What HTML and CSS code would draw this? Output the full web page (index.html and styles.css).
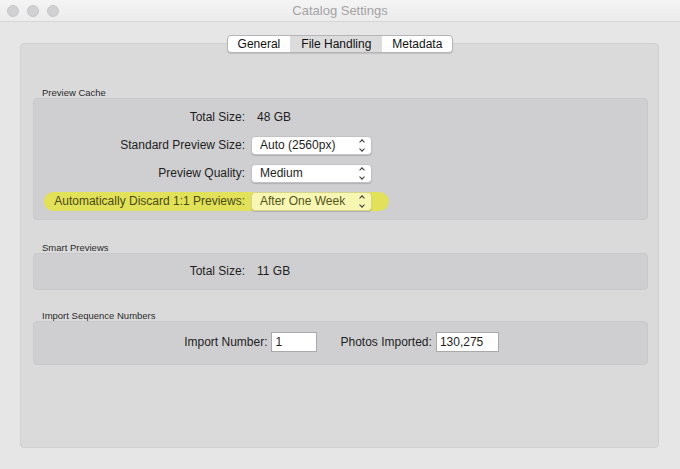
FILE: index.html
```html
<!DOCTYPE html>
<html lang="en">
<head>
    <meta charset="UTF-8">
    <meta name="viewport" content="width=device-width, initial-scale=1.0">
    <title>Catalog Settings</title>
    <link rel="stylesheet" href="styles.css">
</head>
<body>
    <div class="window">
        <div class="titlebar">
            <div class="lights">
                <span class="light"></span>
                <span class="light"></span>
                <span class="light"></span>
            </div>
            <div class="title">Catalog Settings</div>
        </div>

        <div class="content">
            <div class="tabs">
                <span class="tab">General</span>
                <span class="tab selected">File Handling</span>
                <span class="tab">Metadata</span>
            </div>

            <div class="panel">
                <div class="section-label">Preview Cache</div>
                <div class="group">
                    <div class="row">
                        <span class="label">Total Size:</span>
                        <span class="value">48 GB</span>
                    </div>
                    <div class="row">
                        <span class="label">Standard Preview Size:</span>
                        <span class="select">Auto (2560px)</span>
                    </div>
                    <div class="row">
                        <span class="label">Preview Quality:</span>
                        <span class="select">Medium</span>
                    </div>
                    <div class="row highlight">
                        <span class="label">Automatically Discard 1:1 Previews:</span>
                        <span class="select">After One Week</span>
                    </div>
                </div>

                <div class="section-label">Smart Previews</div>
                <div class="group small">
                    <div class="row">
                        <span class="label">Total Size:</span>
                        <span class="value">11 GB</span>
                    </div>
                </div>

                <div class="section-label">Import Sequence Numbers</div>
                <div class="group import">
                    <div class="import-row">
                        <span class="field-label">Import Number:</span>
                        <span class="input short">1</span>
                        <span class="field-label second">Photos Imported:</span>
                        <span class="input">130,275</span>
                    </div>
                </div>
            </div>
        </div>
    </div>
</body>
</html>
```

FILE: styles.css
```css
html, body {
    margin: 0;
    height: 100%;
}
body {
    font-family: "Liberation Sans", Arial, sans-serif;
    font-size: 12px;
    color: #1e1e1e;
    background: #e6e6e7;
}
.window {
    height: 469px;
    display: flex;
    flex-direction: column;
    background: #e6e6e7;
    border-radius: 0 0 5px 5px;
    overflow: hidden;
}
.titlebar {
    height: 22px;
    flex: none;
    box-sizing: border-box;
    display: flex;
    align-items: center;
    background: linear-gradient(#f4f4f4, #ececec);
    border-bottom: 1px solid #d6d6d6;
    position: relative;
}
.lights {
    display: flex;
    gap: 8px;
    padding-left: 7px;
}
.light {
    width: 12px;
    height: 12px;
    box-sizing: border-box;
    border-radius: 50%;
    background: #d1d1d3;
    border: 1px solid #c6c6c8;
}
.title {
    position: absolute;
    left: 0;
    right: 0;
    text-align: center;
    font-size: 13px;
    color: #a3a3a3;
}
.content {
    flex: 1;
    display: flex;
    flex-direction: column;
    padding: 13px 21px 21px 20px;
}
.tabs {
    align-self: center;
    display: flex;
    height: 16px;
    margin-bottom: -10px;
    margin-left: 1px;
    position: relative;
    z-index: 1;
    background: #fff;
    border: 1px solid #b5b5b7;
    border-radius: 4px;
    box-shadow: 0 1px 1px rgba(0, 0, 0, 0.12);
    overflow: hidden;
}
.tab {
    display: flex;
    align-items: center;
    padding: 0 10px;
    color: #111;
}
.tab.selected {
    background: #dcdcdd;
    padding: 0 11px;
}
.panel {
    flex: 1;
    background: #dadadb;
    border: 1px solid #d0d0d1;
    border-radius: 4px;
    padding: 43px 10px 0 12px;
}
.section-label {
    font-size: 9.5px;
    color: #2a2a2a;
    height: 11px;
    line-height: 11px;
    padding-left: 9px;
}
.group {
    background: #cfcfd1;
    border: 1px solid #c9c9cb;
    border-radius: 4px;
    padding: 8px 0 8px;
    display: flex;
    flex-direction: column;
    gap: 8px;
    margin-bottom: 22px;
}
.group.small {
    padding: 7px 0 8px;
    margin-bottom: 20px;
}
.group.import {
    padding: 10px 0 12px;
}
.row {
    display: flex;
    align-items: center;
    height: 20px;
    position: relative;
    isolation: isolate;
}
.label {
    width: 211px;
    text-align: right;
    flex: none;
}
.value {
    padding-left: 12px;
}
.select {
    margin-left: 6px;
    width: 121px;
    height: 19px;
    box-sizing: border-box;
    display: flex;
    align-items: center;
    padding-left: 8px;
    background: #fff;
    border: 1px solid #c2c2c4;
    border-radius: 4px;
    box-shadow: 0 1px 1px rgba(0, 0, 0, 0.15);
    position: relative;
}
.select::before,
.select::after {
    content: "";
    position: absolute;
    right: 7px;
    width: 3px;
    height: 3px;
    transform: rotate(45deg);
}
.select::before {
    top: 3px;
    border-left: 1.3px solid #333;
    border-top: 1.3px solid #333;
}
.select::after {
    bottom: 3px;
    border-right: 1.3px solid #333;
    border-bottom: 1.3px solid #333;
}
.highlight::before {
    content: "";
    position: absolute;
    left: 10px;
    top: 1px;
    width: 345px;
    height: 19px;
    border-radius: 10px;
    background: #e2e15a;
    z-index: -1;
}
.highlight .label {
    color: #4a4a14;
}
.highlight .select {
    background: #f7f6b2;
    color: #55551a;
    border-color: #d6d590;
}
.import-row {
    display: flex;
    align-items: center;
    justify-content: center;
    margin-left: 2px;
}
.field-label {
    margin-right: 4px;
}
.field-label.second {
    margin-left: 23px;
}
.input {
    height: 20px;
    box-sizing: border-box;
    width: 63px;
    padding-left: 3px;
    display: flex;
    align-items: center;
    background: #fff;
    border: 1px solid #a9a9ab;
}
.input.short {
    width: 46px;
}
```
